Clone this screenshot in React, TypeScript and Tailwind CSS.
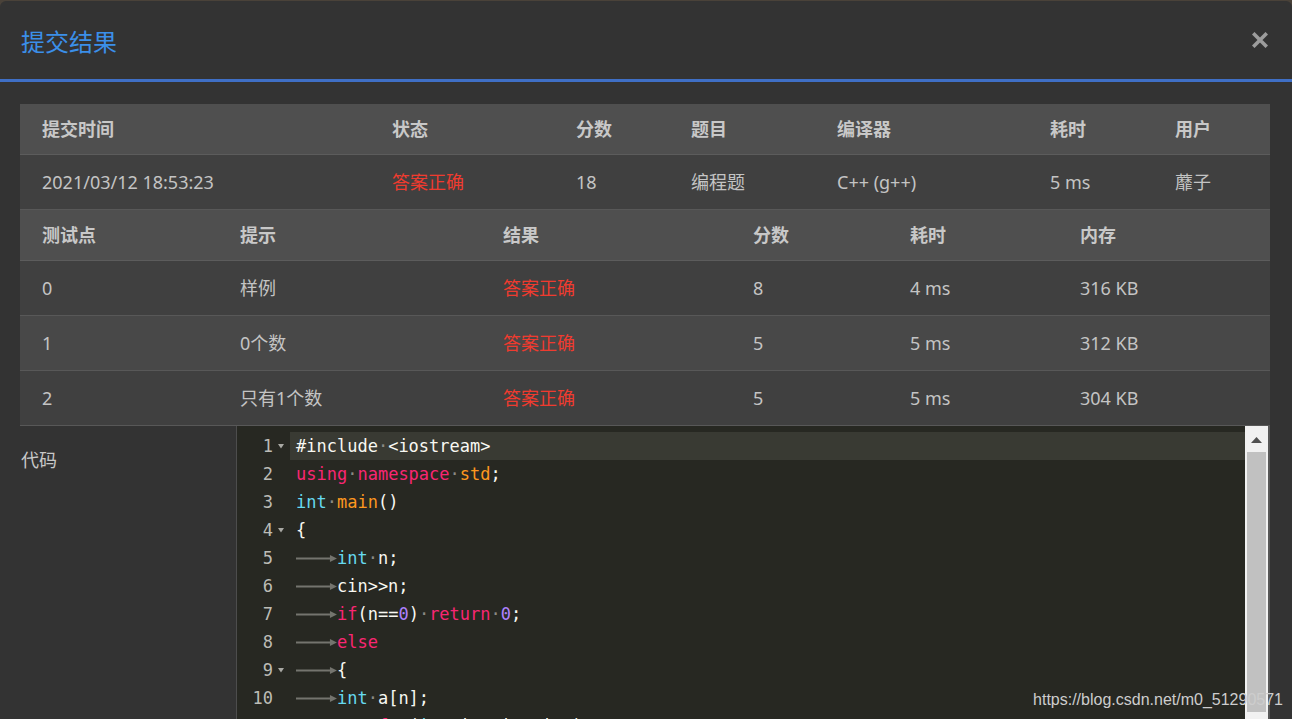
import React from "react";

type Tok = [string, string];

const W = "text-[#f8f8f2]";
const K = "text-[#f92672]";
const O = "text-[#fd971f]";
const T = "text-[#66d9ef]";
const N = "text-[#ae81ff]";
const I = "text-[#8a8a84]";

const TAB: Tok = ["\t", ""];
const SP: Tok = ["·", I];

const code: { toks: Tok[]; fold?: boolean }[] = [
  { toks: [["#include", W], SP, ["<iostream>", W]], fold: true },
  { toks: [["using", K], SP, ["namespace", K], SP, ["std", O], [";", W]] },
  { toks: [["int", T], SP, ["main", O], ["()", W]] },
  { toks: [["{", W]], fold: true },
  { toks: [TAB, ["int", T], SP, ["n;", W]] },
  { toks: [TAB, ["cin>>n;", W]] },
  { toks: [TAB, ["if", K], ["(n==", W], ["0", N], [")", W], SP, ["return", K], SP, ["0", N], [";", W]] },
  { toks: [TAB, ["else", K]] },
  { toks: [TAB, ["{", W]], fold: true },
  { toks: [TAB, ["int", T], SP, ["a[n];", W]] },
  { toks: [TAB, TAB, ["for", K], ["(", W], ["int", T], SP, ["i=", W], ["0", N], [";i<n;i++)", W]] },
];

const head1 = ["提交时间", "状态", "分数", "题目", "编译器", "耗时", "用户"];
const row1 = ["2021/03/12 18:53:23", "答案正确", "18", "编程题", "C++ (g++)", "5 ms", "蘼子"];
const head2 = ["测试点", "提示", "结果", "分数", "耗时", "内存"];
const rows2 = [
  { id: "0", hint: "样例", score: "8", time: "4 ms", mem: "316 KB", bg: "bg-[#404040]" },
  { id: "1", hint: "0个数", score: "5", time: "5 ms", mem: "312 KB", bg: "bg-[#484848]" },
  { id: "2", hint: "只有1个数", score: "5", time: "5 ms", mem: "304 KB", bg: "bg-[#404040]" },
];

const RED = "text-[#ef3b2f]";

function TabArrow() {
  // ace draws tabs as a long arrow
  return (
    <span className="inline-block h-[28px] w-[4ch] align-top">
      <svg width="100%" height="28" viewBox="0 0 41 28" preserveAspectRatio="none">
        <path d="M0 14.5 H35" stroke="#74746e" strokeWidth="2" />
        <path d="M34 11 L41 14.5 L34 18 Z" fill="#74746e" />
      </svg>
    </span>
  );
}

export default function App() {
  return (
    <div className="h-[719px] w-[1292px] overflow-hidden bg-[#4a4239] pt-px font-['Noto_Sans','Noto_Sans_CJK_SC',sans-serif]">
      <div className="relative h-full rounded-t-[6px] bg-[#333333]">
        {/* header */}
        <header className="flex h-[81px] items-center justify-between border-b-[3px] border-[#3f6fc5] pl-[21px] pr-[24px] pt-[4px]">
          <h1 className="text-[24px] leading-none text-[#3b8fe9]">提交结果</h1>
          <svg width="16" height="16" viewBox="0 0 16 16" className="mb-[5px]">
            <path d="M2.5 2.5 L13.5 13.5 M13.5 2.5 L2.5 13.5" stroke="#9c9c9c" strokeWidth="3.6" strokeLinecap="square" />
          </svg>
        </header>

        <div className="pl-5 pr-[22px] pt-[22px] text-[18px] text-[#c4c4c4]">
          {/* summary table */}
          <div className="grid grid-cols-[350px_184px_115px_146px_213px_125px_1fr] h-[51px] border-b border-[#5c5c5c] bg-[#4f4f4f] font-bold text-[#c8c8c8]">
            {head1.map((h) => (
              <div key={h} className="flex items-center pl-[22px]">{h}</div>
            ))}
          </div>
          <div className="grid grid-cols-[350px_184px_115px_146px_213px_125px_1fr] h-[55px] border-b border-[#585858] bg-[#404040]">
            {row1.map((c, i) => (
              <div key={i} className={`flex items-center pl-[22px] ${i === 1 ? RED : ""}`}>{c}</div>
            ))}
          </div>

          {/* test points */}
          <div className="grid grid-cols-[198px_263px_250px_157px_170px_1fr] h-[51px] border-b border-[#5c5c5c] bg-[#4f4f4f] font-bold text-[#c8c8c8]">
            {head2.map((h) => (
              <div key={h} className="flex items-center pl-[22px]">{h}</div>
            ))}
          </div>
          {rows2.map((r) => (
            <div key={r.id} className={`grid grid-cols-[198px_263px_250px_157px_170px_1fr] h-[55px] border-b border-[#585858] ${r.bg}`}>
              <div className="flex items-center pl-[22px]">{r.id}</div>
              <div className="flex items-center pl-[22px]">{r.hint}</div>
              <div className={`flex items-center pl-[22px] ${RED}`}>答案正确</div>
              <div className="flex items-center pl-[22px]">{r.score}</div>
              <div className="flex items-center pl-[22px]">{r.time}</div>
              <div className="flex items-center pl-[22px]">{r.mem}</div>
            </div>
          ))}

          {/* code */}
          <div className="flex h-[300px]">
            <div className="w-[216px] pl-px pt-[22px] leading-[24px] text-[#c8c8c8]">代码</div>
            <div className="flex flex-1 border-l border-[#4d4d4d] bg-[#272822]">
              <div className="flex-1 overflow-hidden pt-[6px] font-['DejaVu_Sans_Mono',monospace] text-[17px] leading-[28px]">
                {code.map((line, i) => (
                  <div key={i} className="flex h-[28px]">
                    <div className="flex w-[53px] shrink-0 items-center">
                      <span className="w-[36px] text-right text-[#bcbcb6]">{i + 1}</span>
                      <span className="flex w-[17px] justify-start pl-[5px]">
                        {line.fold && (
                          <svg width="6" height="5" viewBox="0 0 6 5">
                            <path d="M0 0 L6 0 L3 4.5 Z" fill="#a9a9a4" />
                          </svg>
                        )}
                      </span>
                    </div>
                    <div className={`flex-1 whitespace-pre pl-[6px] ${i === 0 ? "bg-[#393a33]" : ""}`}>
                      {line.toks.map(([t, c], j) =>
                        t === "\t" ? <TabArrow key={j} /> : <span key={j} className={c}>{t}</span>
                      )}
                    </div>
                  </div>
                ))}
              </div>
              <div className="flex w-[25px] shrink-0 flex-col border-r-2 border-[#575757] bg-[#f1f1f1] pt-px">
                <div className="flex h-[25px] items-start justify-center pt-[10px]">
                  <svg width="11" height="6" viewBox="0 0 11 6">
                    <path d="M0 6 L5.5 0 L11 6 Z" fill="#505050" />
                  </svg>
                </div>
                <div className="mx-[2px] h-[260px] bg-[#c1c1c1]" />
              </div>
            </div>
          </div>
        </div>

        <div className="absolute right-[9px] top-[689px] font-['Liberation_Sans',Arial,sans-serif] text-[16px] leading-[20px] text-[#cdcdcd]">
          https://blog.csdn.net/m0_51290571
        </div>
      </div>
    </div>
  );
}
